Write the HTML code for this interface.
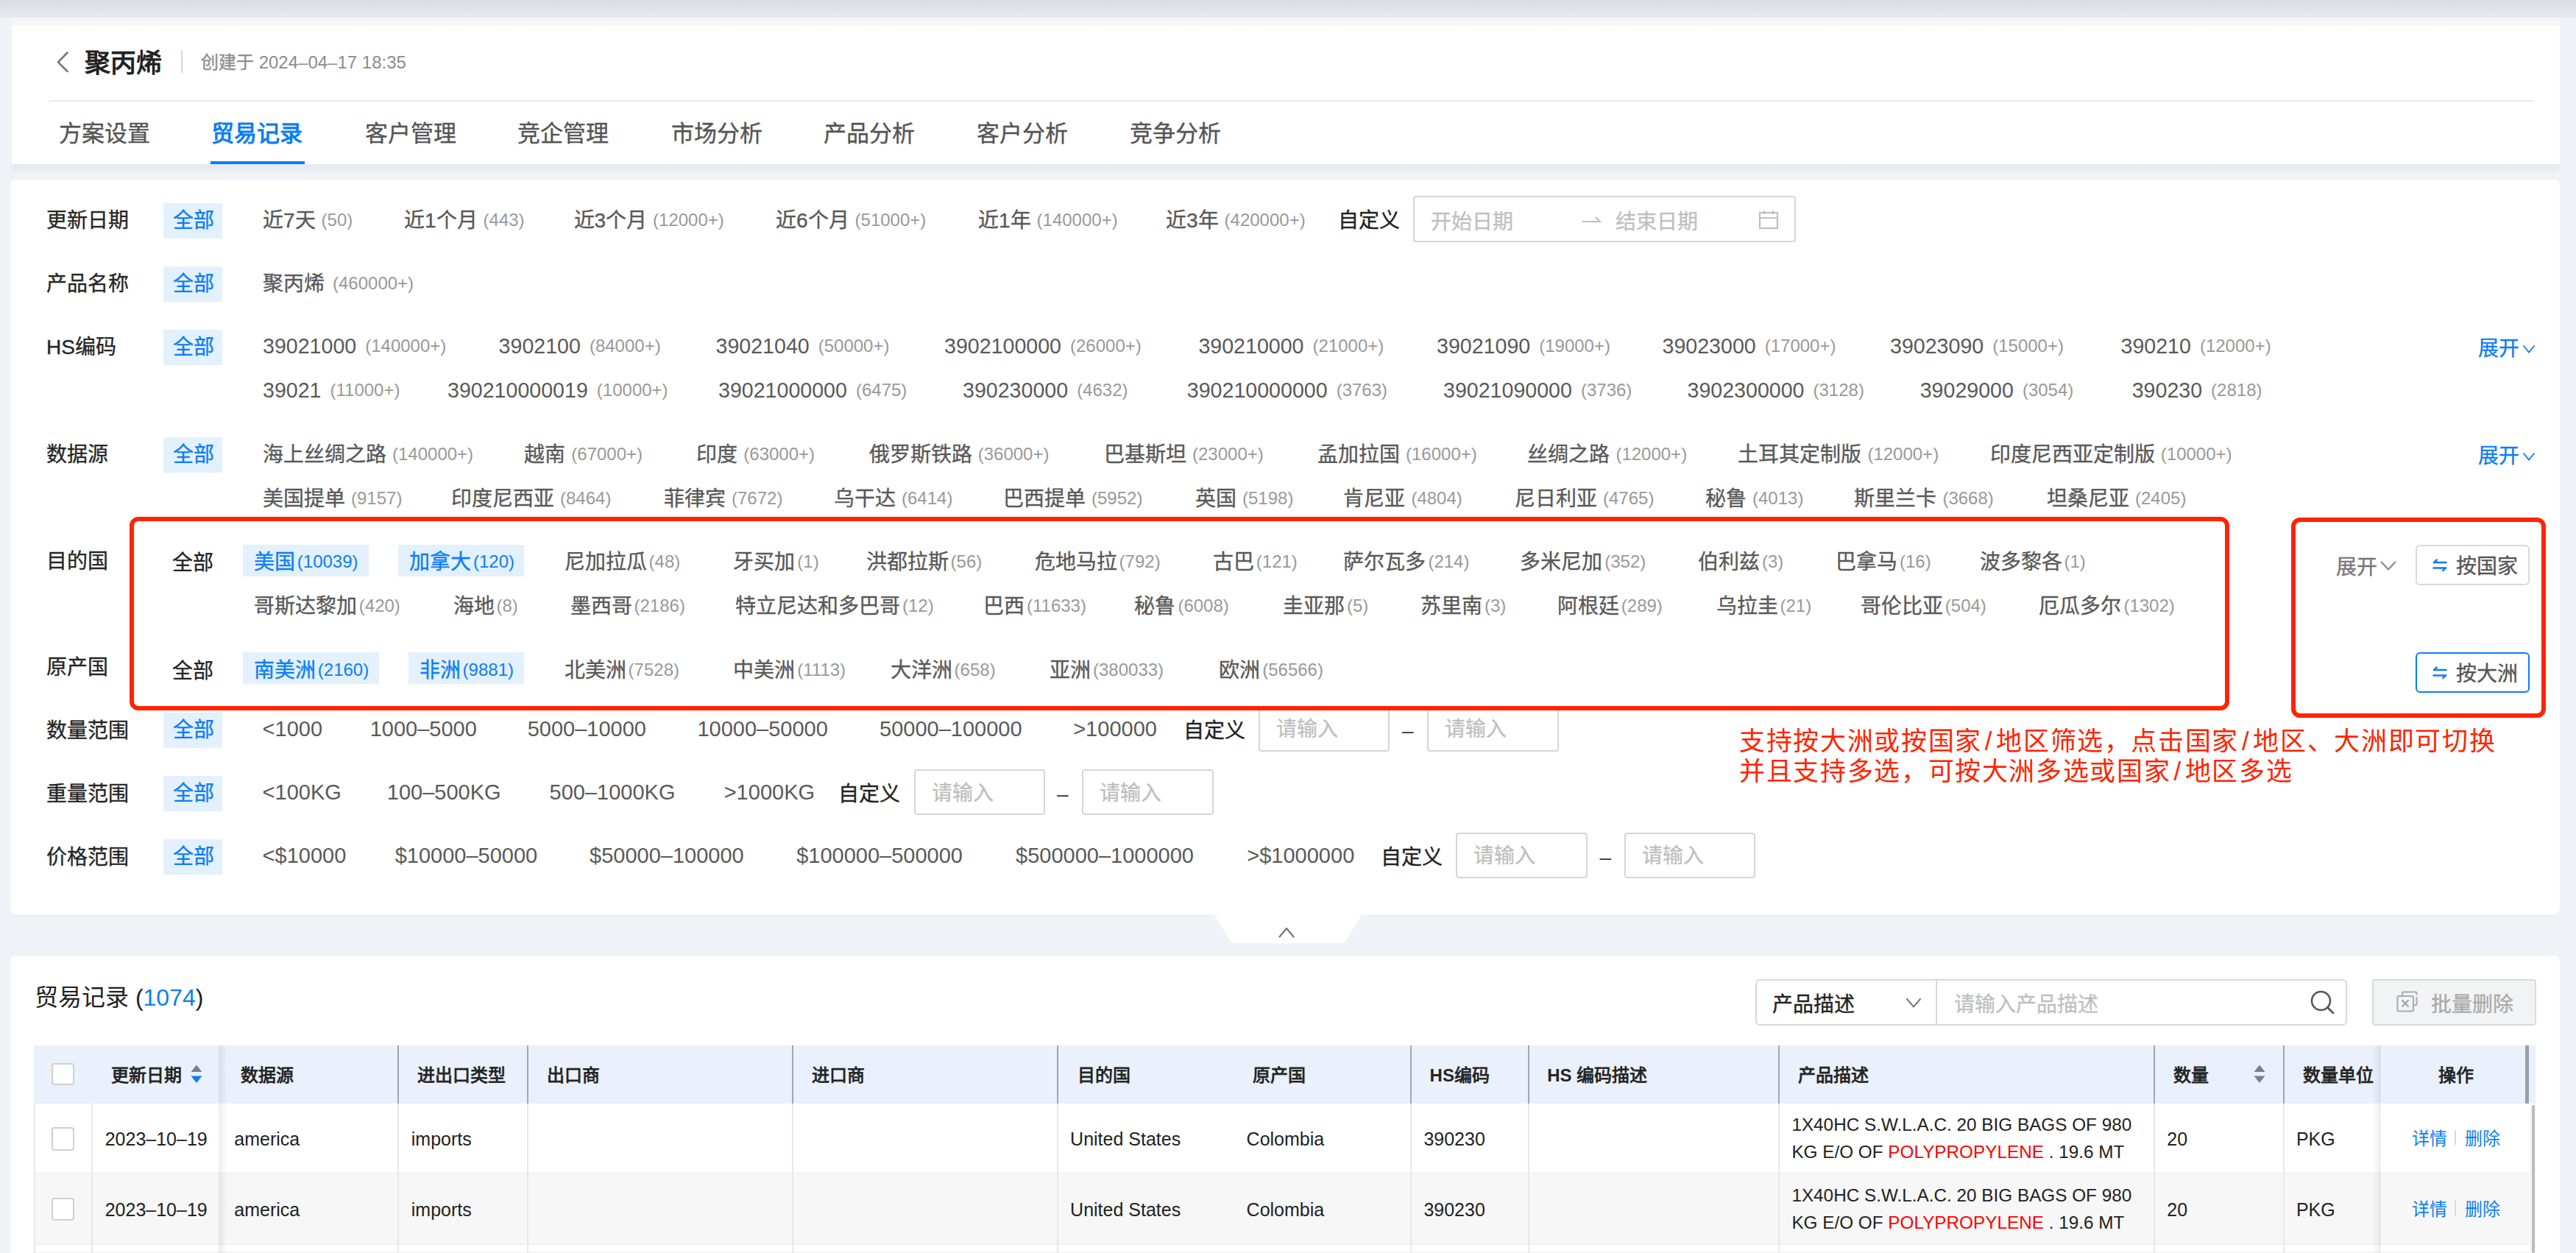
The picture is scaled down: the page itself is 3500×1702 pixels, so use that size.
<!DOCTYPE html>
<html lang="zh-CN"><head><meta charset="utf-8"><title>贸易记录</title>
<style>
html,body{margin:0;padding:0;width:3500px;height:1702px;overflow:hidden;background:#f0f2f7}
body{position:relative;font-family:"Liberation Sans",sans-serif}
.t{position:absolute;white-space:nowrap}
.r{position:absolute}
.k{-webkit-text-stroke:0.35px currentColor}
</style></head><body>
<div class="r" style="left:0.0px;top:0.0px;width:3500.0px;height:1702.0px;background:#f0f2f7"></div>
<div class="r" style="left:0.0px;top:0.0px;width:3500.0px;height:24.0px;background:linear-gradient(#d9dce3,#e6e9f0)"></div>
<div class="r" style="left:14.0px;top:222.0px;width:3464.0px;height:14.0px;background:linear-gradient(#e7e9ee 0%,#e9ebf0 55%,#f0f2f7 100%);border-radius:0 0 12px 12px"></div>
<div class="r" style="left:16.0px;top:24.0px;width:3462.0px;height:199.0px;background:#fff"></div>
<div class="r" style="left:16.0px;top:24.0px;width:3462.0px;height:11.0px;background:#f6f6f7"></div>
<div class="r" style="left:14.0px;top:244.0px;width:3464.0px;height:998.0px;background:#fff;border-radius:8px"></div>
<svg class="r" style="left:1640px;top:1240px" width="220" height="45" viewBox="0 0 220 45"><path d="M9.4 1.6 L31 37 Q33 41.5 38 41.5 L182 41.5 Q187 41.5 189 37 L210.5 1.6 Z" fill="#fff"/><path d="M98.5 32.5 L108 21 L117.5 32.5" fill="none" stroke="#777" stroke-width="2.2" stroke-linecap="round" stroke-linejoin="round"/></svg>
<div class="r" style="left:14.0px;top:1298.0px;width:3464.0px;height:404.0px;background:#fff;border-radius:8px 8px 0 0"></div>
<svg class="r" style="left:70px;top:64px" width="30" height="40" viewBox="0 0 30 40"><path d="M21.5 7.5 L9 20.3 L21.5 33" fill="none" stroke="#777" stroke-width="2.6" stroke-linecap="round" stroke-linejoin="round"/></svg>
<div class="t " style="left:115.0px;top:59.5px;font-size:35px;line-height:52px;color:#222;font-weight:700;">聚丙烯</div>
<div class="r" style="left:246.0px;top:68.0px;width:2.0px;height:31.0px;background:#d3d7de"></div>
<div class="t " style="left:273.0px;top:66.5px;font-size:24px;line-height:36px;color:#8c8c8c;font-weight:400;"><span class="k">创建于</span> 2024–04–17 18:35</div>
<div class="r" style="left:66.0px;top:136.0px;width:3376.0px;height:2.0px;background:#eaeaea"></div>
<div class="t k" style="left:80.0px;top:158.5px;font-size:31px;line-height:46px;color:#555;font-weight:400;">方案设置</div>
<div class="t " style="left:287.0px;top:158.5px;font-size:31px;line-height:46px;color:#0b7ef5;font-weight:700;">贸易记录</div>
<div class="t k" style="left:495.5px;top:158.5px;font-size:31px;line-height:46px;color:#555;font-weight:400;">客户管理</div>
<div class="t k" style="left:703.0px;top:158.5px;font-size:31px;line-height:46px;color:#555;font-weight:400;">竞企管理</div>
<div class="t k" style="left:912.0px;top:158.5px;font-size:31px;line-height:46px;color:#555;font-weight:400;">市场分析</div>
<div class="t k" style="left:1119.0px;top:158.5px;font-size:31px;line-height:46px;color:#555;font-weight:400;">产品分析</div>
<div class="t k" style="left:1327.0px;top:158.5px;font-size:31px;line-height:46px;color:#555;font-weight:400;">客户分析</div>
<div class="t k" style="left:1535.0px;top:158.5px;font-size:31px;line-height:46px;color:#555;font-weight:400;">竞争分析</div>
<div class="r" style="left:286.0px;top:219.0px;width:128.0px;height:4.0px;background:#0b7ef5"></div>
<div class="t k" style="left:63.0px;top:279.0px;font-size:28px;line-height:42px;color:#262626;font-weight:400;">更新日期</div>
<div class="r" style="left:222.0px;top:276.0px;width:80.0px;height:48.0px;background:#e3f0fe"></div>
<div class="t k" style="left:234.5px;top:278.5px;font-size:28px;line-height:42px;color:#0b7ef5;font-weight:400;">全部</div>
<div class="t " style="left:357.0px;top:279.0px;font-size:28px;line-height:42px;color:#595959;font-weight:400;white-space:nowrap"><span class="k">近7天</span><span style="font-size:24px;color:#999999;margin-left:8px;position:relative;top:-2px">(50)</span></div>
<div class="t " style="left:549.0px;top:279.0px;font-size:28px;line-height:42px;color:#595959;font-weight:400;white-space:nowrap"><span class="k">近1个月</span><span style="font-size:24px;color:#999999;margin-left:8px;position:relative;top:-2px">(443)</span></div>
<div class="t " style="left:779.5px;top:279.0px;font-size:28px;line-height:42px;color:#595959;font-weight:400;white-space:nowrap"><span class="k">近3个月</span><span style="font-size:24px;color:#999999;margin-left:8px;position:relative;top:-2px">(12000+)</span></div>
<div class="t " style="left:1054.0px;top:279.0px;font-size:28px;line-height:42px;color:#595959;font-weight:400;white-space:nowrap"><span class="k">近6个月</span><span style="font-size:24px;color:#999999;margin-left:8px;position:relative;top:-2px">(51000+)</span></div>
<div class="t " style="left:1329.0px;top:279.0px;font-size:28px;line-height:42px;color:#595959;font-weight:400;white-space:nowrap"><span class="k">近1年</span><span style="font-size:24px;color:#999999;margin-left:8px;position:relative;top:-2px">(140000+)</span></div>
<div class="t " style="left:1584.0px;top:279.0px;font-size:28px;line-height:42px;color:#595959;font-weight:400;white-space:nowrap"><span class="k">近3年</span><span style="font-size:24px;color:#999999;margin-left:8px;position:relative;top:-2px">(420000+)</span></div>
<div class="t k" style="left:1818.0px;top:279.0px;font-size:28px;line-height:42px;color:#222;font-weight:400;">自定义</div>
<div class="r" style="left:1920.0px;top:266.0px;width:520.0px;height:63.0px;border:2px solid #d6d6d6;border-radius:4px;box-sizing:border-box"></div>
<div class="t k" style="left:1944.0px;top:280.5px;font-size:28px;line-height:42px;color:#bfbfbf;font-weight:400;">开始日期</div>
<svg class="r" style="left:2145px;top:288px" width="34" height="20" viewBox="0 0 34 20"><path d="M5 13 L29 13 L23 7" fill="none" stroke="#bfbfbf" stroke-width="2"/></svg>
<div class="t k" style="left:2195.0px;top:280.5px;font-size:28px;line-height:42px;color:#bfbfbf;font-weight:400;">结束日期</div>
<svg class="r" style="left:2388px;top:285px" width="30" height="28" viewBox="0 0 30 28"><rect x="3" y="4" width="24" height="21" fill="none" stroke="#bfbfbf" stroke-width="2.2"/><path d="M3 11 H27 M9 1 V6 M21 1 V6" stroke="#bfbfbf" stroke-width="2.2"/></svg>
<div class="t k" style="left:63.0px;top:365.0px;font-size:28px;line-height:42px;color:#262626;font-weight:400;">产品名称</div>
<div class="r" style="left:222.0px;top:362.0px;width:80.0px;height:48.0px;background:#e3f0fe"></div>
<div class="t k" style="left:234.5px;top:364.5px;font-size:28px;line-height:42px;color:#0b7ef5;font-weight:400;">全部</div>
<div class="t " style="left:357.0px;top:365.0px;font-size:28px;line-height:42px;color:#595959;font-weight:400;white-space:nowrap"><span class="k">聚丙烯</span><span style="font-size:24px;color:#999999;margin-left:11px;position:relative;top:-2px">(460000+)</span></div>
<div class="t k" style="left:63.0px;top:450.5px;font-size:28px;line-height:42px;color:#262626;font-weight:400;">HS编码</div>
<div class="r" style="left:222.0px;top:448.0px;width:80.0px;height:48.0px;background:#e3f0fe"></div>
<div class="t k" style="left:234.5px;top:450.5px;font-size:28px;line-height:42px;color:#0b7ef5;font-weight:400;">全部</div>
<div class="t " style="left:357.0px;top:449.0px;font-size:28.6px;line-height:43px;color:#595959;font-weight:400;white-space:nowrap">39021000<span style="font-size:24px;color:#999999;margin-left:12px;position:relative;top:-2px">(140000+)</span></div>
<div class="t " style="left:677.6px;top:449.0px;font-size:28.6px;line-height:43px;color:#595959;font-weight:400;white-space:nowrap">3902100<span style="font-size:24px;color:#999999;margin-left:12px;position:relative;top:-2px">(84000+)</span></div>
<div class="t " style="left:972.5px;top:449.0px;font-size:28.6px;line-height:43px;color:#595959;font-weight:400;white-space:nowrap">39021040<span style="font-size:24px;color:#999999;margin-left:12px;position:relative;top:-2px">(50000+)</span></div>
<div class="t " style="left:1283.0px;top:449.0px;font-size:28.6px;line-height:43px;color:#595959;font-weight:400;white-space:nowrap">3902100000<span style="font-size:24px;color:#999999;margin-left:12px;position:relative;top:-2px">(26000+)</span></div>
<div class="t " style="left:1628.4px;top:449.0px;font-size:28.6px;line-height:43px;color:#595959;font-weight:400;white-space:nowrap">390210000<span style="font-size:24px;color:#999999;margin-left:12px;position:relative;top:-2px">(21000+)</span></div>
<div class="t " style="left:1952.0px;top:449.0px;font-size:28.6px;line-height:43px;color:#595959;font-weight:400;white-space:nowrap">39021090<span style="font-size:24px;color:#999999;margin-left:12px;position:relative;top:-2px">(19000+)</span></div>
<div class="t " style="left:2258.5px;top:449.0px;font-size:28.6px;line-height:43px;color:#595959;font-weight:400;white-space:nowrap">39023000<span style="font-size:24px;color:#999999;margin-left:12px;position:relative;top:-2px">(17000+)</span></div>
<div class="t " style="left:2568.0px;top:449.0px;font-size:28.6px;line-height:43px;color:#595959;font-weight:400;white-space:nowrap">39023090<span style="font-size:24px;color:#999999;margin-left:12px;position:relative;top:-2px">(15000+)</span></div>
<div class="t " style="left:2881.5px;top:449.0px;font-size:28.6px;line-height:43px;color:#595959;font-weight:400;white-space:nowrap">390210<span style="font-size:24px;color:#999999;margin-left:12px;position:relative;top:-2px">(12000+)</span></div>
<div class="t " style="left:357.0px;top:509.0px;font-size:28.6px;line-height:43px;color:#595959;font-weight:400;white-space:nowrap">39021<span style="font-size:24px;color:#999999;margin-left:12px;position:relative;top:-2px">(11000+)</span></div>
<div class="t " style="left:608.0px;top:509.0px;font-size:28.6px;line-height:43px;color:#595959;font-weight:400;white-space:nowrap">390210000019<span style="font-size:24px;color:#999999;margin-left:12px;position:relative;top:-2px">(10000+)</span></div>
<div class="t " style="left:976.0px;top:509.0px;font-size:28.6px;line-height:43px;color:#595959;font-weight:400;white-space:nowrap">39021000000<span style="font-size:24px;color:#999999;margin-left:12px;position:relative;top:-2px">(6475)</span></div>
<div class="t " style="left:1308.0px;top:509.0px;font-size:28.6px;line-height:43px;color:#595959;font-weight:400;white-space:nowrap">390230000<span style="font-size:24px;color:#999999;margin-left:12px;position:relative;top:-2px">(4632)</span></div>
<div class="t " style="left:1612.8px;top:509.0px;font-size:28.6px;line-height:43px;color:#595959;font-weight:400;white-space:nowrap">390210000000<span style="font-size:24px;color:#999999;margin-left:12px;position:relative;top:-2px">(3763)</span></div>
<div class="t " style="left:1961.0px;top:509.0px;font-size:28.6px;line-height:43px;color:#595959;font-weight:400;white-space:nowrap">39021090000<span style="font-size:24px;color:#999999;margin-left:12px;position:relative;top:-2px">(3736)</span></div>
<div class="t " style="left:2292.5px;top:509.0px;font-size:28.6px;line-height:43px;color:#595959;font-weight:400;white-space:nowrap">3902300000<span style="font-size:24px;color:#999999;margin-left:12px;position:relative;top:-2px">(3128)</span></div>
<div class="t " style="left:2608.7px;top:509.0px;font-size:28.6px;line-height:43px;color:#595959;font-weight:400;white-space:nowrap">39029000<span style="font-size:24px;color:#999999;margin-left:12px;position:relative;top:-2px">(3054)</span></div>
<div class="t " style="left:2896.7px;top:509.0px;font-size:28.6px;line-height:43px;color:#595959;font-weight:400;white-space:nowrap">390230<span style="font-size:24px;color:#999999;margin-left:12px;position:relative;top:-2px">(2818)</span></div>
<div class="t k" style="left:3366.5px;top:452.5px;font-size:28px;line-height:42px;color:#0b7ef5;font-weight:400;">展开</div>
<svg class="r" style="left:3426px;top:467.0px" width="20" height="16" viewBox="0 0 20 16"><path d="M2.5 2.5 L10 11.5 L17.5 2.5" fill="none" stroke="#0b7ef5" stroke-width="1.8"/></svg>
<div class="t k" style="left:63.0px;top:596.5px;font-size:28px;line-height:42px;color:#262626;font-weight:400;">数据源</div>
<div class="r" style="left:222.0px;top:594.0px;width:80.0px;height:48.0px;background:#e3f0fe"></div>
<div class="t k" style="left:234.5px;top:596.5px;font-size:28px;line-height:42px;color:#0b7ef5;font-weight:400;">全部</div>
<div class="t " style="left:357.0px;top:596.5px;font-size:28px;line-height:42px;color:#595959;font-weight:400;white-space:nowrap"><span class="k">海上丝绸之路</span><span style="font-size:24px;color:#999999;margin-left:8px;position:relative;top:-2px">(140000+)</span></div>
<div class="t " style="left:712.3px;top:596.5px;font-size:28px;line-height:42px;color:#595959;font-weight:400;white-space:nowrap"><span class="k">越南</span><span style="font-size:24px;color:#999999;margin-left:8px;position:relative;top:-2px">(67000+)</span></div>
<div class="t " style="left:946.3px;top:596.5px;font-size:28px;line-height:42px;color:#595959;font-weight:400;white-space:nowrap"><span class="k">印度</span><span style="font-size:24px;color:#999999;margin-left:8px;position:relative;top:-2px">(63000+)</span></div>
<div class="t " style="left:1180.7px;top:596.5px;font-size:28px;line-height:42px;color:#595959;font-weight:400;white-space:nowrap"><span class="k">俄罗斯铁路</span><span style="font-size:24px;color:#999999;margin-left:8px;position:relative;top:-2px">(36000+)</span></div>
<div class="t " style="left:1500.0px;top:596.5px;font-size:28px;line-height:42px;color:#595959;font-weight:400;white-space:nowrap"><span class="k">巴基斯坦</span><span style="font-size:24px;color:#999999;margin-left:8px;position:relative;top:-2px">(23000+)</span></div>
<div class="t " style="left:1790.0px;top:596.5px;font-size:28px;line-height:42px;color:#595959;font-weight:400;white-space:nowrap"><span class="k">孟加拉国</span><span style="font-size:24px;color:#999999;margin-left:8px;position:relative;top:-2px">(16000+)</span></div>
<div class="t " style="left:2075.4px;top:596.5px;font-size:28px;line-height:42px;color:#595959;font-weight:400;white-space:nowrap"><span class="k">丝绸之路</span><span style="font-size:24px;color:#999999;margin-left:8px;position:relative;top:-2px">(12000+)</span></div>
<div class="t " style="left:2361.4px;top:596.5px;font-size:28px;line-height:42px;color:#595959;font-weight:400;white-space:nowrap"><span class="k">土耳其定制版</span><span style="font-size:24px;color:#999999;margin-left:8px;position:relative;top:-2px">(12000+)</span></div>
<div class="t " style="left:2703.8px;top:596.5px;font-size:28px;line-height:42px;color:#595959;font-weight:400;white-space:nowrap"><span class="k">印度尼西亚定制版</span><span style="font-size:24px;color:#999999;margin-left:8px;position:relative;top:-2px">(10000+)</span></div>
<div class="t " style="left:357.0px;top:656.5px;font-size:28px;line-height:42px;color:#595959;font-weight:400;white-space:nowrap"><span class="k">美国提单</span><span style="font-size:24px;color:#999999;margin-left:8px;position:relative;top:-2px">(9157)</span></div>
<div class="t " style="left:613.0px;top:656.5px;font-size:28px;line-height:42px;color:#595959;font-weight:400;white-space:nowrap"><span class="k">印度尼西亚</span><span style="font-size:24px;color:#999999;margin-left:8px;position:relative;top:-2px">(8464)</span></div>
<div class="t " style="left:902.0px;top:656.5px;font-size:28px;line-height:42px;color:#595959;font-weight:400;white-space:nowrap"><span class="k">菲律宾</span><span style="font-size:24px;color:#999999;margin-left:8px;position:relative;top:-2px">(7672)</span></div>
<div class="t " style="left:1133.0px;top:656.5px;font-size:28px;line-height:42px;color:#595959;font-weight:400;white-space:nowrap"><span class="k">乌干达</span><span style="font-size:24px;color:#999999;margin-left:8px;position:relative;top:-2px">(6414)</span></div>
<div class="t " style="left:1363.0px;top:656.5px;font-size:28px;line-height:42px;color:#595959;font-weight:400;white-space:nowrap"><span class="k">巴西提单</span><span style="font-size:24px;color:#999999;margin-left:8px;position:relative;top:-2px">(5952)</span></div>
<div class="t " style="left:1624.0px;top:656.5px;font-size:28px;line-height:42px;color:#595959;font-weight:400;white-space:nowrap"><span class="k">英国</span><span style="font-size:24px;color:#999999;margin-left:8px;position:relative;top:-2px">(5198)</span></div>
<div class="t " style="left:1825.4px;top:656.5px;font-size:28px;line-height:42px;color:#595959;font-weight:400;white-space:nowrap"><span class="k">肯尼亚</span><span style="font-size:24px;color:#999999;margin-left:8px;position:relative;top:-2px">(4804)</span></div>
<div class="t " style="left:2058.0px;top:656.5px;font-size:28px;line-height:42px;color:#595959;font-weight:400;white-space:nowrap"><span class="k">尼日利亚</span><span style="font-size:24px;color:#999999;margin-left:8px;position:relative;top:-2px">(4765)</span></div>
<div class="t " style="left:2317.0px;top:656.5px;font-size:28px;line-height:42px;color:#595959;font-weight:400;white-space:nowrap"><span class="k">秘鲁</span><span style="font-size:24px;color:#999999;margin-left:8px;position:relative;top:-2px">(4013)</span></div>
<div class="t " style="left:2519.4px;top:656.5px;font-size:28px;line-height:42px;color:#595959;font-weight:400;white-space:nowrap"><span class="k">斯里兰卡</span><span style="font-size:24px;color:#999999;margin-left:8px;position:relative;top:-2px">(3668)</span></div>
<div class="t " style="left:2781.0px;top:656.5px;font-size:28px;line-height:42px;color:#595959;font-weight:400;white-space:nowrap"><span class="k">坦桑尼亚</span><span style="font-size:24px;color:#999999;margin-left:8px;position:relative;top:-2px">(2405)</span></div>
<div class="t k" style="left:3366.5px;top:598.5px;font-size:28px;line-height:42px;color:#0b7ef5;font-weight:400;">展开</div>
<svg class="r" style="left:3426px;top:613.0px" width="20" height="16" viewBox="0 0 20 16"><path d="M2.5 2.5 L10 11.5 L17.5 2.5" fill="none" stroke="#0b7ef5" stroke-width="1.8"/></svg>
<div class="t k" style="left:62.5px;top:741.5px;font-size:28px;line-height:42px;color:#262626;font-weight:400;">目的国</div>
<div class="t k" style="left:234.4px;top:743.5px;font-size:28px;line-height:42px;color:#222;font-weight:400;">全部</div>
<div class="r" style="left:329.8px;top:740.0px;width:171.2px;height:43.4px;background:#e3f0fe"></div>
<div class="r" style="left:540.8px;top:740.0px;width:171.2px;height:43.4px;background:#e3f0fe"></div>
<div class="t " style="left:344.8px;top:742.5px;font-size:28px;line-height:42px;color:#0b7ef5;font-weight:400;white-space:nowrap"><span class="k">美国</span><span style="font-size:24px;color:#0b7ef5;margin-left:3px;position:relative;top:-2px">(10039)</span></div>
<div class="t " style="left:556.0px;top:742.5px;font-size:28px;line-height:42px;color:#0b7ef5;font-weight:400;white-space:nowrap"><span class="k">加拿大</span><span style="font-size:24px;color:#0b7ef5;margin-left:3px;position:relative;top:-2px">(120)</span></div>
<div class="t " style="left:766.6px;top:742.5px;font-size:28px;line-height:42px;color:#595959;font-weight:400;white-space:nowrap"><span class="k">尼加拉瓜</span><span style="font-size:24px;color:#999999;margin-left:3px;position:relative;top:-2px">(48)</span></div>
<div class="t " style="left:996.3px;top:742.5px;font-size:28px;line-height:42px;color:#595959;font-weight:400;white-space:nowrap"><span class="k">牙买加</span><span style="font-size:24px;color:#999999;margin-left:3px;position:relative;top:-2px">(1)</span></div>
<div class="t " style="left:1176.6px;top:742.5px;font-size:28px;line-height:42px;color:#595959;font-weight:400;white-space:nowrap"><span class="k">洪都拉斯</span><span style="font-size:24px;color:#999999;margin-left:3px;position:relative;top:-2px">(56)</span></div>
<div class="t " style="left:1405.6px;top:742.5px;font-size:28px;line-height:42px;color:#595959;font-weight:400;white-space:nowrap"><span class="k">危地马拉</span><span style="font-size:24px;color:#999999;margin-left:3px;position:relative;top:-2px">(792)</span></div>
<div class="t " style="left:1647.8px;top:742.5px;font-size:28px;line-height:42px;color:#595959;font-weight:400;white-space:nowrap"><span class="k">古巴</span><span style="font-size:24px;color:#999999;margin-left:3px;position:relative;top:-2px">(121)</span></div>
<div class="t " style="left:1825.4px;top:742.5px;font-size:28px;line-height:42px;color:#595959;font-weight:400;white-space:nowrap"><span class="k">萨尔瓦多</span><span style="font-size:24px;color:#999999;margin-left:3px;position:relative;top:-2px">(214)</span></div>
<div class="t " style="left:2065.2px;top:742.5px;font-size:28px;line-height:42px;color:#595959;font-weight:400;white-space:nowrap"><span class="k">多米尼加</span><span style="font-size:24px;color:#999999;margin-left:3px;position:relative;top:-2px">(352)</span></div>
<div class="t " style="left:2307.0px;top:742.5px;font-size:28px;line-height:42px;color:#595959;font-weight:400;white-space:nowrap"><span class="k">伯利兹</span><span style="font-size:24px;color:#999999;margin-left:3px;position:relative;top:-2px">(3)</span></div>
<div class="t " style="left:2494.0px;top:742.5px;font-size:28px;line-height:42px;color:#595959;font-weight:400;white-space:nowrap"><span class="k">巴拿马</span><span style="font-size:24px;color:#999999;margin-left:3px;position:relative;top:-2px">(16)</span></div>
<div class="t " style="left:2689.5px;top:742.5px;font-size:28px;line-height:42px;color:#595959;font-weight:400;white-space:nowrap"><span class="k">波多黎各</span><span style="font-size:24px;color:#999999;margin-left:3px;position:relative;top:-2px">(1)</span></div>
<div class="t " style="left:344.8px;top:802.5px;font-size:28px;line-height:42px;color:#595959;font-weight:400;white-space:nowrap"><span class="k">哥斯达黎加</span><span style="font-size:24px;color:#999999;margin-left:3px;position:relative;top:-2px">(420)</span></div>
<div class="t " style="left:615.5px;top:802.5px;font-size:28px;line-height:42px;color:#595959;font-weight:400;white-space:nowrap"><span class="k">海地</span><span style="font-size:24px;color:#999999;margin-left:3px;position:relative;top:-2px">(8)</span></div>
<div class="t " style="left:774.5px;top:802.5px;font-size:28px;line-height:42px;color:#595959;font-weight:400;white-space:nowrap"><span class="k">墨西哥</span><span style="font-size:24px;color:#999999;margin-left:3px;position:relative;top:-2px">(2186)</span></div>
<div class="t " style="left:999.0px;top:802.5px;font-size:28px;line-height:42px;color:#595959;font-weight:400;white-space:nowrap"><span class="k">特立尼达和多巴哥</span><span style="font-size:24px;color:#999999;margin-left:3px;position:relative;top:-2px">(12)</span></div>
<div class="t " style="left:1336.0px;top:802.5px;font-size:28px;line-height:42px;color:#595959;font-weight:400;white-space:nowrap"><span class="k">巴西</span><span style="font-size:24px;color:#999999;margin-left:3px;position:relative;top:-2px">(11633)</span></div>
<div class="t " style="left:1541.4px;top:802.5px;font-size:28px;line-height:42px;color:#595959;font-weight:400;white-space:nowrap"><span class="k">秘鲁</span><span style="font-size:24px;color:#999999;margin-left:3px;position:relative;top:-2px">(6008)</span></div>
<div class="t " style="left:1743.0px;top:802.5px;font-size:28px;line-height:42px;color:#595959;font-weight:400;white-space:nowrap"><span class="k">圭亚那</span><span style="font-size:24px;color:#999999;margin-left:3px;position:relative;top:-2px">(5)</span></div>
<div class="t " style="left:1930.0px;top:802.5px;font-size:28px;line-height:42px;color:#595959;font-weight:400;white-space:nowrap"><span class="k">苏里南</span><span style="font-size:24px;color:#999999;margin-left:3px;position:relative;top:-2px">(3)</span></div>
<div class="t " style="left:2115.8px;top:802.5px;font-size:28px;line-height:42px;color:#595959;font-weight:400;white-space:nowrap"><span class="k">阿根廷</span><span style="font-size:24px;color:#999999;margin-left:3px;position:relative;top:-2px">(289)</span></div>
<div class="t " style="left:2331.5px;top:802.5px;font-size:28px;line-height:42px;color:#595959;font-weight:400;white-space:nowrap"><span class="k">乌拉圭</span><span style="font-size:24px;color:#999999;margin-left:3px;position:relative;top:-2px">(21)</span></div>
<div class="t " style="left:2527.8px;top:802.5px;font-size:28px;line-height:42px;color:#595959;font-weight:400;white-space:nowrap"><span class="k">哥伦比亚</span><span style="font-size:24px;color:#999999;margin-left:3px;position:relative;top:-2px">(504)</span></div>
<div class="t " style="left:2770.4px;top:802.5px;font-size:28px;line-height:42px;color:#595959;font-weight:400;white-space:nowrap"><span class="k">厄瓜多尔</span><span style="font-size:24px;color:#999999;margin-left:3px;position:relative;top:-2px">(1302)</span></div>
<div class="t k" style="left:63.0px;top:886.2px;font-size:28px;line-height:42px;color:#262626;font-weight:400;">原产国</div>
<div class="t k" style="left:234.4px;top:890.5px;font-size:28px;line-height:42px;color:#222;font-weight:400;">全部</div>
<div class="r" style="left:329.8px;top:886.3px;width:184.8px;height:43.2px;background:#e3f0fe"></div>
<div class="r" style="left:554.7px;top:886.3px;width:157.3px;height:43.2px;background:#e3f0fe"></div>
<div class="t " style="left:344.8px;top:889.5px;font-size:28px;line-height:42px;color:#0b7ef5;font-weight:400;white-space:nowrap"><span class="k">南美洲</span><span style="font-size:24px;color:#0b7ef5;margin-left:3px;position:relative;top:-2px">(2160)</span></div>
<div class="t " style="left:569.6px;top:889.5px;font-size:28px;line-height:42px;color:#0b7ef5;font-weight:400;white-space:nowrap"><span class="k">非洲</span><span style="font-size:24px;color:#0b7ef5;margin-left:3px;position:relative;top:-2px">(9881)</span></div>
<div class="t " style="left:766.6px;top:889.5px;font-size:28px;line-height:42px;color:#595959;font-weight:400;white-space:nowrap"><span class="k">北美洲</span><span style="font-size:24px;color:#999999;margin-left:3px;position:relative;top:-2px">(7528)</span></div>
<div class="t " style="left:996.3px;top:889.5px;font-size:28px;line-height:42px;color:#595959;font-weight:400;white-space:nowrap"><span class="k">中美洲</span><span style="font-size:24px;color:#999999;margin-left:3px;position:relative;top:-2px">(1113)</span></div>
<div class="t " style="left:1209.6px;top:889.5px;font-size:28px;line-height:42px;color:#595959;font-weight:400;white-space:nowrap"><span class="k">大洋洲</span><span style="font-size:24px;color:#999999;margin-left:3px;position:relative;top:-2px">(658)</span></div>
<div class="t " style="left:1426.0px;top:889.5px;font-size:28px;line-height:42px;color:#595959;font-weight:400;white-space:nowrap"><span class="k">亚洲</span><span style="font-size:24px;color:#999999;margin-left:3px;position:relative;top:-2px">(380033)</span></div>
<div class="t " style="left:1656.2px;top:889.5px;font-size:28px;line-height:42px;color:#595959;font-weight:400;white-space:nowrap"><span class="k">欧洲</span><span style="font-size:24px;color:#999999;margin-left:3px;position:relative;top:-2px">(56566)</span></div>
<div class="t k" style="left:3174.2px;top:749.5px;font-size:28px;line-height:42px;color:#777;font-weight:400;">展开</div>
<svg class="r" style="left:3232px;top:760px" width="26" height="18" viewBox="0 0 26 18"><path d="M3 3 L13 13.5 L23 3" fill="none" stroke="#888" stroke-width="2.2"/></svg>
<div class="r" style="left:3282.3px;top:740.3px;width:155.2px;height:55.0px;border:2px solid #d9d9d9;border-radius:6px;box-sizing:border-box;background:#fff"></div>
<svg class="r" style="left:3302px;top:758.8px" width="26" height="20" viewBox="0 0 26 20"><path d="M4 5 H22.5 M4.2 5.6 L9.5 0.8 M3.5 12.5 H22 M21.8 11.9 L16.5 16.7" fill="none" stroke="#0b7ef5" stroke-width="2.4"/></svg>
<div class="t k" style="left:3336.6px;top:749.3px;font-size:28px;line-height:42px;color:#555;font-weight:400;">按国家</div>
<div class="r" style="left:3282.3px;top:886.3px;width:155.2px;height:55.1px;border:2px solid #0b7ef5;border-radius:6px;box-sizing:border-box;background:#fff"></div>
<svg class="r" style="left:3302px;top:904.8px" width="26" height="20" viewBox="0 0 26 20"><path d="M4 5 H22.5 M4.2 5.6 L9.5 0.8 M3.5 12.5 H22 M21.8 11.9 L16.5 16.7" fill="none" stroke="#0b7ef5" stroke-width="2.4"/></svg>
<div class="t k" style="left:3336.6px;top:895.3px;font-size:28px;line-height:42px;color:#555;font-weight:400;">按大洲</div>
<div class="t k" style="left:63.0px;top:971.5px;font-size:28px;line-height:42px;color:#262626;font-weight:400;">数量范围</div>
<div class="r" style="left:222.0px;top:968.0px;width:80.0px;height:48.0px;background:#e3f0fe"></div>
<div class="t k" style="left:234.5px;top:970.5px;font-size:28px;line-height:42px;color:#0b7ef5;font-weight:400;">全部</div>
<div class="t " style="left:356.6px;top:967.5px;font-size:29px;line-height:44px;color:#595959;font-weight:400;">&lt;1000</div>
<div class="t " style="left:502.7px;top:967.5px;font-size:29px;line-height:44px;color:#595959;font-weight:400;">1000–5000</div>
<div class="t " style="left:716.7px;top:967.5px;font-size:29px;line-height:44px;color:#595959;font-weight:400;">5000–10000</div>
<div class="t " style="left:947.4px;top:967.5px;font-size:29px;line-height:44px;color:#595959;font-weight:400;">10000–50000</div>
<div class="t " style="left:1195.0px;top:967.5px;font-size:29px;line-height:44px;color:#595959;font-weight:400;">50000–100000</div>
<div class="t " style="left:1458.2px;top:967.5px;font-size:29px;line-height:44px;color:#595959;font-weight:400;">&gt;100000</div>
<div class="t k" style="left:1607.7px;top:971.5px;font-size:28px;line-height:42px;color:#222;font-weight:400;">自定义</div>
<div class="r" style="left:1709.6px;top:958.5px;width:178.6px;height:62.8px;border:2px solid #d6d6d6;border-radius:4px;box-sizing:border-box;background:#fff"></div>
<div class="t k" style="left:1733.6px;top:970.4px;font-size:28px;line-height:42px;color:#bfbfbf;font-weight:400;">请输入</div>
<div class="t " style="left:1905.0px;top:971.5px;font-size:28px;line-height:42px;color:#333;font-weight:400;">–</div>
<div class="r" style="left:1938.5px;top:958.5px;width:179.0px;height:62.8px;border:2px solid #d6d6d6;border-radius:4px;box-sizing:border-box;background:#fff"></div>
<div class="t k" style="left:1962.5px;top:970.4px;font-size:28px;line-height:42px;color:#bfbfbf;font-weight:400;">请输入</div>
<div class="t k" style="left:63.0px;top:1057.5px;font-size:28px;line-height:42px;color:#262626;font-weight:400;">重量范围</div>
<div class="r" style="left:222.0px;top:1054.0px;width:80.0px;height:48.0px;background:#e3f0fe"></div>
<div class="t k" style="left:234.5px;top:1056.5px;font-size:28px;line-height:42px;color:#0b7ef5;font-weight:400;">全部</div>
<div class="t " style="left:356.6px;top:1053.5px;font-size:29px;line-height:44px;color:#595959;font-weight:400;">&lt;100KG</div>
<div class="t " style="left:525.8px;top:1053.5px;font-size:29px;line-height:44px;color:#595959;font-weight:400;">100–500KG</div>
<div class="t " style="left:746.6px;top:1053.5px;font-size:29px;line-height:44px;color:#595959;font-weight:400;">500–1000KG</div>
<div class="t " style="left:983.7px;top:1053.5px;font-size:29px;line-height:44px;color:#595959;font-weight:400;">&gt;1000KG</div>
<div class="t k" style="left:1139.3px;top:1057.5px;font-size:28px;line-height:42px;color:#222;font-weight:400;">自定义</div>
<div class="r" style="left:1241.8px;top:1045.0px;width:178.4px;height:62.3px;border:2px solid #d6d6d6;border-radius:4px;box-sizing:border-box;background:#fff"></div>
<div class="t k" style="left:1265.8px;top:1056.7px;font-size:28px;line-height:42px;color:#bfbfbf;font-weight:400;">请输入</div>
<div class="t " style="left:1436.0px;top:1057.5px;font-size:28px;line-height:42px;color:#333;font-weight:400;">–</div>
<div class="r" style="left:1470.4px;top:1045.0px;width:179.0px;height:62.3px;border:2px solid #d6d6d6;border-radius:4px;box-sizing:border-box;background:#fff"></div>
<div class="t k" style="left:1494.4px;top:1056.7px;font-size:28px;line-height:42px;color:#bfbfbf;font-weight:400;">请输入</div>
<div class="t k" style="left:63.0px;top:1143.5px;font-size:28px;line-height:42px;color:#262626;font-weight:400;">价格范围</div>
<div class="r" style="left:222.0px;top:1140.0px;width:80.0px;height:48.0px;background:#e3f0fe"></div>
<div class="t k" style="left:234.5px;top:1142.5px;font-size:28px;line-height:42px;color:#0b7ef5;font-weight:400;">全部</div>
<div class="t " style="left:356.6px;top:1139.5px;font-size:29px;line-height:44px;color:#595959;font-weight:400;">&lt;$10000</div>
<div class="t " style="left:536.7px;top:1139.5px;font-size:29px;line-height:44px;color:#595959;font-weight:400;">$10000–50000</div>
<div class="t " style="left:801.0px;top:1139.5px;font-size:29px;line-height:44px;color:#595959;font-weight:400;">$50000–100000</div>
<div class="t " style="left:1082.2px;top:1139.5px;font-size:29px;line-height:44px;color:#595959;font-weight:400;">$100000–500000</div>
<div class="t " style="left:1380.0px;top:1139.5px;font-size:29px;line-height:44px;color:#595959;font-weight:400;">$500000–1000000</div>
<div class="t " style="left:1694.3px;top:1139.5px;font-size:29px;line-height:44px;color:#595959;font-weight:400;">&gt;$1000000</div>
<div class="t k" style="left:1876.4px;top:1143.5px;font-size:28px;line-height:42px;color:#222;font-weight:400;">自定义</div>
<div class="r" style="left:1977.6px;top:1130.7px;width:179.0px;height:62.2px;border:2px solid #d6d6d6;border-radius:4px;box-sizing:border-box;background:#fff"></div>
<div class="t k" style="left:2001.6px;top:1142.3px;font-size:28px;line-height:42px;color:#bfbfbf;font-weight:400;">请输入</div>
<div class="t " style="left:2173.5px;top:1143.5px;font-size:28px;line-height:42px;color:#333;font-weight:400;">–</div>
<div class="r" style="left:2206.9px;top:1130.7px;width:178.3px;height:62.2px;border:2px solid #d6d6d6;border-radius:4px;box-sizing:border-box;background:#fff"></div>
<div class="t k" style="left:2230.9px;top:1142.3px;font-size:28px;line-height:42px;color:#bfbfbf;font-weight:400;">请输入</div>
<div class="r" style="left:176.0px;top:702.0px;width:2852.5px;height:262.5px;border:6px solid #ff2400;border-radius:12px;box-sizing:border-box"></div>
<div class="r" style="left:3113.0px;top:703.0px;width:345.5px;height:271.5px;border:6px solid #ff2400;border-radius:12px;box-sizing:border-box"></div>
<div class="t " style="left:2363.0px;top:987.0px;font-size:35px;line-height:40px;color:#ff2400;font-weight:400;letter-spacing:1.65px;white-space:nowrap">支持按大洲或按国家<span style="padding:0 4px">/</span>地区筛选，点击国家<span style="padding:0 4px">/</span>地区、大洲即可切换</div>
<div class="t " style="left:2363.0px;top:1028.0px;font-size:35px;line-height:40px;color:#ff2400;font-weight:400;letter-spacing:1.65px;white-space:nowrap">并且支持多选，可按大洲多选或国家<span style="padding:0 4px">/</span>地区多选</div>
<div class="t" style="left:47px;top:1331.0px;font-size:32px;line-height:48px;color:#222">贸易记录 (<span style="color:#0b7ef5">1074</span>)</div>
<div class="r" style="left:2384.8px;top:1330.0px;width:804.5px;height:63.0px;border:2px solid #d9d9d9;border-radius:6px;box-sizing:border-box;background:#fff"></div>
<div class="r" style="left:2629.5px;top:1331.0px;width:2.0px;height:61.0px;background:#d9d9d9"></div>
<div class="t k" style="left:2408.0px;top:1343.5px;font-size:28px;line-height:42px;color:#222;font-weight:400;">产品描述</div>
<svg class="r" style="left:2586px;top:1352.5px" width="28" height="20" viewBox="0 0 28 20"><path d="M4.5 3.5 L14 14.5 L23.5 3.5" fill="none" stroke="#777" stroke-width="2"/></svg>
<div class="t k" style="left:2655.0px;top:1343.5px;font-size:28px;line-height:42px;color:#bfbfbf;font-weight:400;">请输入产品描述</div>
<svg class="r" style="left:3136px;top:1342px" width="40" height="40" viewBox="0 0 40 40"><circle cx="17.5" cy="17.5" r="12.5" fill="none" stroke="#555" stroke-width="2.6"/><path d="M26.5 26.5 L34 34" stroke="#555" stroke-width="2.8" stroke-linecap="round"/></svg>
<div class="r" style="left:3222.8px;top:1330.0px;width:223.2px;height:63.0px;border:2px solid #d9d9d9;border-radius:4px;box-sizing:border-box;background:#f2f3f5"></div>
<svg class="r" style="left:3252px;top:1345px" width="36" height="34" viewBox="0 0 36 34"><rect x="5.5" y="8" width="21.5" height="20.5" rx="1.5" fill="none" stroke="#aaa" stroke-width="2"/><path d="M12 7.5 V4 Q12 2.6 13.4 2.6 H30.2 Q31.6 2.6 31.6 4 V6.2 M31.6 9 V18.8 Q31.6 20.3 30.2 20.3 H28" fill="none" stroke="#aaa" stroke-width="2"/><path d="M11.5 13.5 L20.5 22.5 M20.5 13.5 L11.5 22.5" stroke="#999" stroke-width="1.8"/></svg>
<div class="t k" style="left:3303.0px;top:1344.0px;font-size:28px;line-height:42px;color:#aaa;font-weight:400;">批量删除</div>
<div class="r" style="left:46.0px;top:1420.0px;width:3399.0px;height:79.0px;background:#eaf0fc"></div>
<div class="r" style="left:70.3px;top:1443.5px;width:30.9px;height:30.5px;border:2px solid #d0d0d0;border-radius:4px;box-sizing:border-box;background:#fff"></div>
<div class="t " style="left:151.0px;top:1442.5px;font-size:24px;line-height:36px;color:#262626;font-weight:700;">更新日期</div>
<svg class="r" style="left:258px;top:1445px" width="18" height="28" viewBox="0 0 18 28"><path d="M1.5 11 L9 1.5 L16.5 11 Z" fill="#7b7f88"/><path d="M1.5 16.5 L9 26 L16.5 16.5 Z" fill="#0b7ef5"/></svg>
<div class="r" style="left:539.8px;top:1420.0px;width:2.0px;height:79.0px;background:#a3a7b2"></div>
<div class="r" style="left:715.7px;top:1420.0px;width:2.0px;height:79.0px;background:#a3a7b2"></div>
<div class="r" style="left:1076.1px;top:1420.0px;width:2.0px;height:79.0px;background:#a3a7b2"></div>
<div class="r" style="left:1436.2px;top:1420.0px;width:2.0px;height:79.0px;background:#a3a7b2"></div>
<div class="r" style="left:1916.1px;top:1420.0px;width:2.0px;height:79.0px;background:#a3a7b2"></div>
<div class="r" style="left:2076.1px;top:1420.0px;width:2.0px;height:79.0px;background:#a3a7b2"></div>
<div class="r" style="left:2415.8px;top:1420.0px;width:2.0px;height:79.0px;background:#a3a7b2"></div>
<div class="r" style="left:2925.6px;top:1420.0px;width:2.0px;height:79.0px;background:#a3a7b2"></div>
<div class="r" style="left:3102.0px;top:1420.0px;width:2.0px;height:79.0px;background:#a3a7b2"></div>
<div class="t " style="left:326.8px;top:1442.5px;font-size:24px;line-height:36px;color:#262626;font-weight:700;">数据源</div>
<div class="t " style="left:566.6px;top:1442.5px;font-size:24px;line-height:36px;color:#262626;font-weight:700;">进出口类型</div>
<div class="t " style="left:743.2px;top:1442.5px;font-size:24px;line-height:36px;color:#262626;font-weight:700;">出口商</div>
<div class="t " style="left:1102.6px;top:1442.5px;font-size:24px;line-height:36px;color:#262626;font-weight:700;">进口商</div>
<div class="t " style="left:1464.3px;top:1442.5px;font-size:24px;line-height:36px;color:#262626;font-weight:700;">目的国</div>
<div class="t " style="left:1702.0px;top:1442.5px;font-size:24px;line-height:36px;color:#262626;font-weight:700;">原产国</div>
<div class="t " style="left:1942.6px;top:1442.5px;font-size:24px;line-height:36px;color:#262626;font-weight:700;">HS编码</div>
<div class="t " style="left:2102.2px;top:1442.5px;font-size:24px;line-height:36px;color:#262626;font-weight:700;">HS 编码描述</div>
<div class="t " style="left:2443.0px;top:1442.5px;font-size:24px;line-height:36px;color:#262626;font-weight:700;">产品描述</div>
<div class="t " style="left:2952.8px;top:1442.5px;font-size:24px;line-height:36px;color:#262626;font-weight:700;">数量</div>
<svg class="r" style="left:3061px;top:1445px" width="18" height="28" viewBox="0 0 18 28"><path d="M1.5 11 L9 1.5 L16.5 11 Z" fill="#7b7f88"/><path d="M1.5 16.5 L9 26 L16.5 16.5 Z" fill="#7b7f88"/></svg>
<div class="t " style="left:3128.7px;top:1442.5px;font-size:24px;line-height:36px;color:#262626;font-weight:700;">数量单位</div>
<div class="t " style="left:3312.8px;top:1442.5px;font-size:24px;line-height:36px;color:#262626;font-weight:700;">操作</div>
<div class="r" style="left:3431.0px;top:1420.0px;width:5.0px;height:79.0px;background:#9a9ea6"></div>
<div class="r" style="left:46.0px;top:1499.0px;width:3392.0px;height:95.4px;background:#fff"></div>
<div class="r" style="left:46.0px;top:1593.4px;width:3392.0px;height:2.0px;background:#ebebeb"></div>
<div class="r" style="left:46.0px;top:1594.4px;width:3392.0px;height:96.9px;background:#f7f7f7"></div>
<div class="r" style="left:46.0px;top:1690.3px;width:3392.0px;height:2.0px;background:#ebebeb"></div>
<div class="r" style="left:46.0px;top:1691.3px;width:3392.0px;height:10.7px;background:#fff"></div>
<div class="r" style="left:46.0px;top:1701.0px;width:3392.0px;height:2.0px;background:#ebebeb"></div>
<div class="r" style="left:46.0px;top:1499.0px;width:2.0px;height:203.0px;background:#e8e8e8"></div>
<div class="r" style="left:124.0px;top:1499.0px;width:2.0px;height:203.0px;background:#e8e8e8"></div>
<div class="r" style="left:539.8px;top:1499.0px;width:2.0px;height:203.0px;background:#e8e8e8"></div>
<div class="r" style="left:715.7px;top:1499.0px;width:2.0px;height:203.0px;background:#e8e8e8"></div>
<div class="r" style="left:1076.1px;top:1499.0px;width:2.0px;height:203.0px;background:#e8e8e8"></div>
<div class="r" style="left:1436.2px;top:1499.0px;width:2.0px;height:203.0px;background:#e8e8e8"></div>
<div class="r" style="left:1916.1px;top:1499.0px;width:2.0px;height:203.0px;background:#e8e8e8"></div>
<div class="r" style="left:2076.1px;top:1499.0px;width:2.0px;height:203.0px;background:#e8e8e8"></div>
<div class="r" style="left:2415.8px;top:1499.0px;width:2.0px;height:203.0px;background:#e8e8e8"></div>
<div class="r" style="left:2925.6px;top:1499.0px;width:2.0px;height:203.0px;background:#e8e8e8"></div>
<div class="r" style="left:3102.0px;top:1499.0px;width:2.0px;height:203.0px;background:#e8e8e8"></div>
<div class="r" style="left:297.0px;top:1420.0px;width:12.0px;height:282.0px;background:linear-gradient(90deg,rgba(0,0,0,0.07),rgba(0,0,0,0))"></div>
<div class="r" style="left:3222.8px;top:1420.0px;width:11.9px;height:282.0px;background:linear-gradient(270deg,rgba(0,0,0,0.07),rgba(0,0,0,0))"></div>
<div class="r" style="left:3437.0px;top:1499.0px;width:8.0px;height:203.0px;background:#f7f7f7"></div>
<div class="r" style="left:3439.5px;top:1501.0px;width:4.0px;height:201.0px;background:#bcbcbc;border-radius:2px"></div>
<div class="r" style="left:70.3px;top:1531.4px;width:31.2px;height:31.3px;border:2px solid #d0d0d0;border-radius:4px;box-sizing:border-box;background:#fff"></div>
<div class="t " style="left:142.7px;top:1527.9px;font-size:25px;line-height:38px;color:#222;font-weight:400;">2023–10–19</div>
<div class="t " style="left:318.3px;top:1527.9px;font-size:25px;line-height:38px;color:#222;font-weight:400;">america</div>
<div class="t " style="left:558.8px;top:1527.9px;font-size:25px;line-height:38px;color:#222;font-weight:400;">imports</div>
<div class="t " style="left:1454.1px;top:1527.9px;font-size:25px;line-height:38px;color:#222;font-weight:400;">United States</div>
<div class="t " style="left:1693.6px;top:1527.9px;font-size:25px;line-height:38px;color:#222;font-weight:400;">Colombia</div>
<div class="t " style="left:1934.4px;top:1527.9px;font-size:25px;line-height:38px;color:#222;font-weight:400;">390230</div>
<div class="t " style="left:2434.4px;top:1509.9px;font-size:24.3px;line-height:36px;color:#222;font-weight:400;white-space:nowrap">1X40HC S.W.L.A.C. 20 BIG BAGS OF 980</div>
<div class="t " style="left:2434.4px;top:1547.4px;font-size:24.3px;line-height:36px;color:#222;font-weight:400;white-space:nowrap">KG E/O OF <span style="color:#f00">POLYPROPYLENE</span> . 19.6 MT</div>
<div class="t " style="left:2944.3px;top:1527.9px;font-size:25px;line-height:38px;color:#222;font-weight:400;">20</div>
<div class="t " style="left:3119.9px;top:1527.9px;font-size:25px;line-height:38px;color:#222;font-weight:400;">PKG</div>
<div class="t " style="left:3276.5px;top:1528.9px;font-size:24px;line-height:36px;color:#0b7ef5;font-weight:400;">详情</div>
<div class="r" style="left:3335.0px;top:1535.4px;width:2.0px;height:20.0px;background:#d9d9d9"></div>
<div class="t " style="left:3348.5px;top:1528.9px;font-size:24px;line-height:36px;color:#0b7ef5;font-weight:400;">删除</div>
<div class="r" style="left:70.3px;top:1627.2px;width:31.2px;height:31.3px;border:2px solid #d0d0d0;border-radius:4px;box-sizing:border-box;background:#fff"></div>
<div class="t " style="left:142.7px;top:1623.7px;font-size:25px;line-height:38px;color:#222;font-weight:400;">2023–10–19</div>
<div class="t " style="left:318.3px;top:1623.7px;font-size:25px;line-height:38px;color:#222;font-weight:400;">america</div>
<div class="t " style="left:558.8px;top:1623.7px;font-size:25px;line-height:38px;color:#222;font-weight:400;">imports</div>
<div class="t " style="left:1454.1px;top:1623.7px;font-size:25px;line-height:38px;color:#222;font-weight:400;">United States</div>
<div class="t " style="left:1693.6px;top:1623.7px;font-size:25px;line-height:38px;color:#222;font-weight:400;">Colombia</div>
<div class="t " style="left:1934.4px;top:1623.7px;font-size:25px;line-height:38px;color:#222;font-weight:400;">390230</div>
<div class="t " style="left:2434.4px;top:1605.7px;font-size:24.3px;line-height:36px;color:#222;font-weight:400;white-space:nowrap">1X40HC S.W.L.A.C. 20 BIG BAGS OF 980</div>
<div class="t " style="left:2434.4px;top:1643.2px;font-size:24.3px;line-height:36px;color:#222;font-weight:400;white-space:nowrap">KG E/O OF <span style="color:#f00">POLYPROPYLENE</span> . 19.6 MT</div>
<div class="t " style="left:2944.3px;top:1623.7px;font-size:25px;line-height:38px;color:#222;font-weight:400;">20</div>
<div class="t " style="left:3119.9px;top:1623.7px;font-size:25px;line-height:38px;color:#222;font-weight:400;">PKG</div>
<div class="t " style="left:3276.5px;top:1624.7px;font-size:24px;line-height:36px;color:#0b7ef5;font-weight:400;">详情</div>
<div class="r" style="left:3335.0px;top:1631.2px;width:2.0px;height:20.0px;background:#d9d9d9"></div>
<div class="t " style="left:3348.5px;top:1624.7px;font-size:24px;line-height:36px;color:#0b7ef5;font-weight:400;">删除</div>
</body></html>
